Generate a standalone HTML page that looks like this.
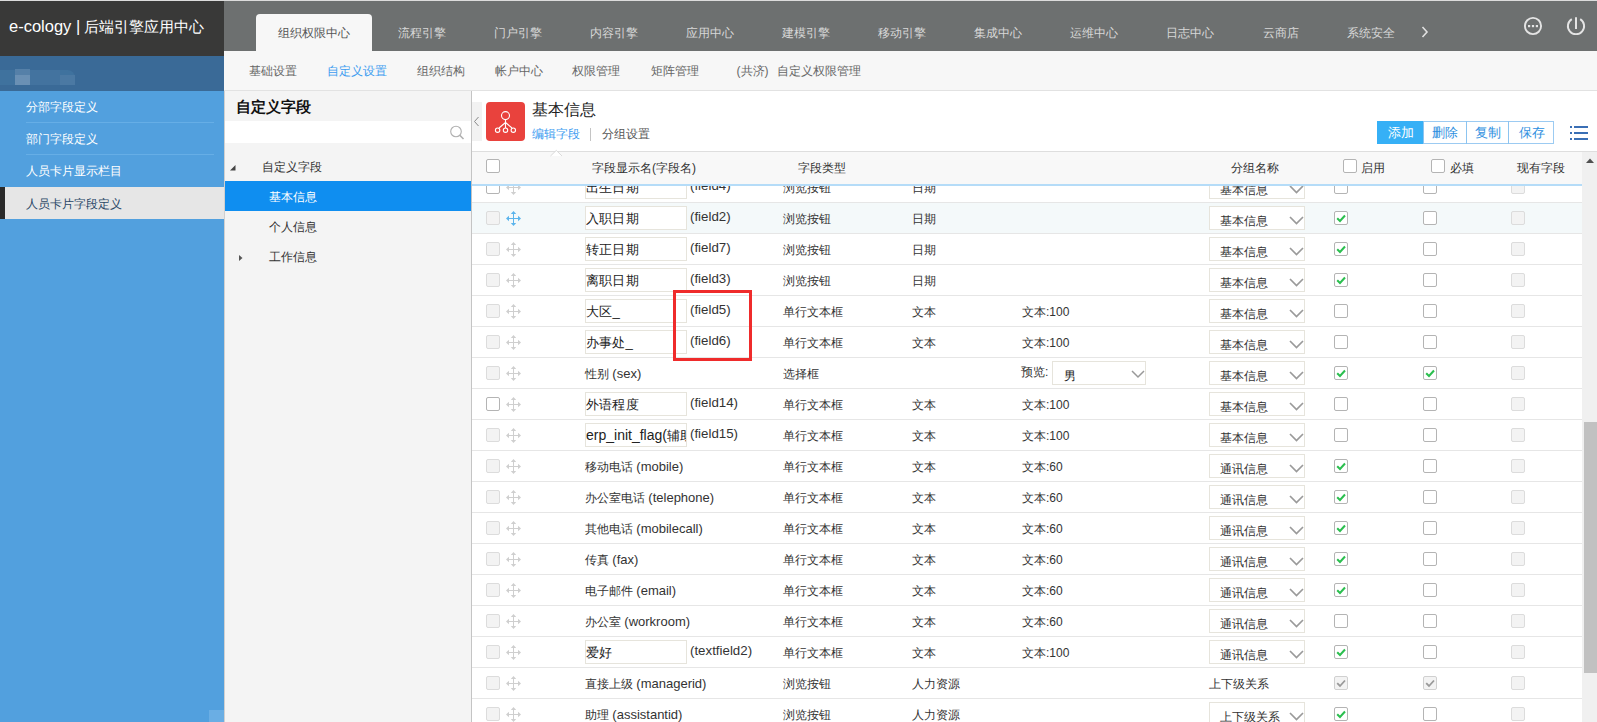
<!DOCTYPE html><html><head><meta charset="utf-8"><style>

*{box-sizing:border-box;margin:0;padding:0}
html,body{width:1597px;height:722px;overflow:hidden;background:#fff;font-family:"Liberation Sans", sans-serif;font-size:12px;color:#333}
.ab{position:absolute}
.t{position:absolute;white-space:nowrap;line-height:14px}
.cb{position:absolute;width:14px;height:14px;border:1px solid #b4b4b4;border-radius:2px;background:#fff}
.cbd{border-color:#dcdcdc;background:#f3f3f3}
.inp{position:absolute;height:24px;border:1px solid #e6e4dc;background:#fff}
.sel{position:absolute;height:24px;border:1px solid #e6e4dc;background:#fff}
svg{position:absolute;overflow:visible}
.c{display:inline-block;width:1em;text-align:center;font-style:normal}

</style></head><body>
<div class="ab" style="left:0;top:0;width:1597px;height:1px;background:#dcdcdc"></div>
<div class="ab" style="left:0;top:1px;width:224px;height:55px;background:#393938"></div>
<div class="t" style="left:9px;top:18px;font-size:15px;line-height:17px;color:#fff"><span style="font-size:16.5px">e-cology |</span> <i class="c">后</i><i class="c">端</i><i class="c">引</i><i class="c">擎</i><i class="c">应</i><i class="c">用</i><i class="c">中</i><i class="c">心</i></div>
<div class="ab" style="left:0;top:56px;width:224px;height:35px;background:#3a6a97"></div>
<div class="ab" style="left:0;top:70px;width:75px;height:15px;background:#3f729e;border-radius:0 8px 8px 0"></div>
<div class="ab" style="left:15px;top:69px;width:15px;height:6px;background:#5580a8"></div>
<div class="ab" style="left:15px;top:75px;width:15px;height:10px;background:#6a90b4"></div>
<div class="ab" style="left:30px;top:70px;width:30px;height:15px;background:#43739f"></div>
<div class="ab" style="left:60px;top:75px;width:15px;height:10px;background:#4b79a3"></div>
<div class="ab" style="left:0;top:91px;width:224px;height:631px;background:#52a0de"></div>
<div class="ab" style="left:209px;top:710px;width:15px;height:12px;background:#6aaee4"></div>
<div class="t" style="left:26px;top:100px;color:#fff"><i class="c">分</i><i class="c">部</i><i class="c">字</i><i class="c">段</i><i class="c">定</i><i class="c">义</i></div>
<div class="ab" style="left:26px;top:122px;width:188px;height:1px;background:#66aee6"></div>
<div class="t" style="left:26px;top:132px;color:#fff"><i class="c">部</i><i class="c">门</i><i class="c">字</i><i class="c">段</i><i class="c">定</i><i class="c">义</i></div>
<div class="ab" style="left:26px;top:154px;width:188px;height:1px;background:#66aee6"></div>
<div class="t" style="left:26px;top:164px;color:#fff"><i class="c">人</i><i class="c">员</i><i class="c">卡</i><i class="c">片</i><i class="c">显</i><i class="c">示</i><i class="c">栏</i><i class="c">目</i></div>
<div class="ab" style="left:0;top:187px;width:224px;height:32px;background:#e6e6e6"></div>
<div class="ab" style="left:0;top:187px;width:5px;height:32px;background:#2a2a2a"></div>
<div class="t" style="left:26px;top:197px;color:#2a4866"><i class="c">人</i><i class="c">员</i><i class="c">卡</i><i class="c">片</i><i class="c">字</i><i class="c">段</i><i class="c">定</i><i class="c">义</i></div>
<div class="ab" style="left:224px;top:1px;width:1373px;height:50px;background:#6d7070"></div>
<div class="ab" style="left:256px;top:14px;width:116px;height:37px;background:#f7f7f7;border-radius:4px 4px 0 0"></div>
<div class="t" style="left:278px;top:26px;color:#555"><i class="c">组</i><i class="c">织</i><i class="c">权</i><i class="c">限</i><i class="c">中</i><i class="c">心</i></div>
<div class="t" style="left:398.0px;top:26px;color:#d8d8d8"><i class="c">流</i><i class="c">程</i><i class="c">引</i><i class="c">擎</i></div>
<div class="t" style="left:494.0px;top:26px;color:#d8d8d8"><i class="c">门</i><i class="c">户</i><i class="c">引</i><i class="c">擎</i></div>
<div class="t" style="left:590.0px;top:26px;color:#d8d8d8"><i class="c">内</i><i class="c">容</i><i class="c">引</i><i class="c">擎</i></div>
<div class="t" style="left:686.0px;top:26px;color:#d8d8d8"><i class="c">应</i><i class="c">用</i><i class="c">中</i><i class="c">心</i></div>
<div class="t" style="left:782.0px;top:26px;color:#d8d8d8"><i class="c">建</i><i class="c">模</i><i class="c">引</i><i class="c">擎</i></div>
<div class="t" style="left:878.0px;top:26px;color:#d8d8d8"><i class="c">移</i><i class="c">动</i><i class="c">引</i><i class="c">擎</i></div>
<div class="t" style="left:974.0px;top:26px;color:#d8d8d8"><i class="c">集</i><i class="c">成</i><i class="c">中</i><i class="c">心</i></div>
<div class="t" style="left:1070.0px;top:26px;color:#d8d8d8"><i class="c">运</i><i class="c">维</i><i class="c">中</i><i class="c">心</i></div>
<div class="t" style="left:1166.0px;top:26px;color:#d8d8d8"><i class="c">日</i><i class="c">志</i><i class="c">中</i><i class="c">心</i></div>
<div class="t" style="left:1262.5px;top:26px;color:#d8d8d8"><i class="c">云</i><i class="c">商</i><i class="c">店</i></div>
<div class="t" style="left:1346.5px;top:26px;color:#d8d8d8"><i class="c">系</i><i class="c">统</i><i class="c">安</i><i class="c">全</i></div>
<svg style="left:1421px;top:26px" width="8" height="12"><path d="M1.5 1 L6 6 L1.5 11" fill="none" stroke="#e0e0e0" stroke-width="1.6"/></svg>
<svg style="left:1523px;top:16px" width="20" height="20"><circle cx="10" cy="10" r="8.1" fill="none" stroke="#e4e4e4" stroke-width="1.9"/><rect x="5" y="9" width="2.2" height="2.2" fill="#e4e4e4"/><rect x="8.9" y="9" width="2.2" height="2.2" fill="#e4e4e4"/><rect x="12.8" y="9" width="2.2" height="2.2" fill="#e4e4e4"/></svg>
<svg style="left:1566px;top:16px" width="20" height="20"><path d="M5.8 3.1 A8.1 8.1 0 1 0 14.2 3.1" fill="none" stroke="#e4e4e4" stroke-width="1.9"/><line x1="10" y1="1.2" x2="10" y2="13" stroke="#e4e4e4" stroke-width="2"/></svg>
<div class="ab" style="left:224px;top:51px;width:1373px;height:40px;background:#f7f7f7;border-bottom:1px solid #e2e2e2"></div>
<div class="t" style="left:249px;top:64px;color:#666"><i class="c">基</i><i class="c">础</i><i class="c">设</i><i class="c">置</i></div>
<div class="t" style="left:327px;top:64px;color:#3d9cf0"><i class="c">自</i><i class="c">定</i><i class="c">义</i><i class="c">设</i><i class="c">置</i></div>
<div class="t" style="left:417px;top:64px;color:#666"><i class="c">组</i><i class="c">织</i><i class="c">结</i><i class="c">构</i></div>
<div class="t" style="left:494.5px;top:64px;color:#666"><i class="c">帐</i><i class="c">户</i><i class="c">中</i><i class="c">心</i></div>
<div class="t" style="left:572px;top:64px;color:#666"><i class="c">权</i><i class="c">限</i><i class="c">管</i><i class="c">理</i></div>
<div class="t" style="left:650.5px;top:64px;color:#666"><i class="c">矩</i><i class="c">阵</i><i class="c">管</i><i class="c">理</i></div>
<div class="t" style="left:736.5px;top:64px;color:#666">(<i class="c">共</i><i class="c">济</i>)<span style="margin-left:8.5px"><i class="c">自</i><i class="c">定</i><i class="c">义</i><i class="c">权</i><i class="c">限</i><i class="c">管</i><i class="c">理</i></span></div>
<div class="ab" style="left:224px;top:91px;width:248px;height:631px;background:#f4f4f4;border-left:1px solid #d0d0d0;border-right:1px solid #c4c4c4"></div>
<div class="t" style="left:236px;top:98px;font-size:15px;line-height:17px;font-weight:bold;color:#111"><i class="c">自</i><i class="c">定</i><i class="c">义</i><i class="c">字</i><i class="c">段</i></div>
<div class="ab" style="left:225px;top:121px;width:246px;height:22px;background:#fff"></div>
<svg style="left:449px;top:125px" width="16" height="16"><circle cx="7" cy="6.5" r="5.3" fill="none" stroke="#b0b0b0" stroke-width="1.1"/><line x1="10.8" y1="10.3" x2="14.5" y2="14" stroke="#b0b0b0" stroke-width="1.6"/></svg>
<svg style="left:230px;top:165px" width="6" height="6"><path d="M5.5 0 L5.5 5.5 L0 5.5 Z" fill="#444"/></svg>
<div class="t" style="left:262px;top:160px;color:#333"><i class="c">自</i><i class="c">定</i><i class="c">义</i><i class="c">字</i><i class="c">段</i></div>
<div class="ab" style="left:225px;top:181px;width:246px;height:30px;background:#0f8ef0"></div>
<div class="t" style="left:269px;top:190px;color:#fff"><i class="c">基</i><i class="c">本</i><i class="c">信</i><i class="c">息</i></div>
<div class="t" style="left:269px;top:220px;color:#333"><i class="c">个</i><i class="c">人</i><i class="c">信</i><i class="c">息</i></div>
<svg style="left:239px;top:255px" width="5" height="8"><path d="M0 0 L3.5 3 L0 6 Z" fill="#555"/></svg>
<div class="t" style="left:269px;top:250px;color:#333"><i class="c">工</i><i class="c">作</i><i class="c">信</i><i class="c">息</i></div>
<div class="ab" style="left:472px;top:102px;width:10px;height:39px;background:#f2f2f2"></div>
<svg style="left:473px;top:116px" width="7" height="11"><path d="M5.5 1 L1.5 5.5 L5.5 10" fill="none" stroke="#888" stroke-width="1"/></svg>
<div class="ab" style="left:486px;top:102px;width:39px;height:39px;background:#e9423d;border-radius:4px"></div>
<svg style="left:486px;top:102px" width="39" height="39"><g fill="none" stroke="#fff" stroke-width="1.1"><circle cx="19.5" cy="13.6" r="4"/><path d="M19.5 17.6 V26 M19.5 20.5 L13 26 M19.5 20.5 L26 26"/><circle cx="11.6" cy="28.2" r="2.2"/><circle cx="19.5" cy="28.2" r="2.2"/><circle cx="27.3" cy="28.2" r="2.2"/></g></svg>
<div class="t" style="left:532px;top:101px;font-size:16px;line-height:18px;color:#222"><i class="c">基</i><i class="c">本</i><i class="c">信</i><i class="c">息</i></div>
<div class="t" style="left:532px;top:127px;color:#3d9cf0"><i class="c">编</i><i class="c">辑</i><i class="c">字</i><i class="c">段</i></div>
<div class="ab" style="left:590px;top:128px;width:1px;height:13px;background:#c4c4c4"></div>
<div class="t" style="left:602px;top:127px;color:#555"><i class="c">分</i><i class="c">组</i><i class="c">设</i><i class="c">置</i></div>
<div class="ab" style="left:1377px;top:121px;width:177px;height:23px;border:1px solid #9ccbf2;background:#fff"></div>
<div class="ab" style="left:1377px;top:121px;width:46px;height:23px;background:#36b0f6"></div>
<div class="ab" style="left:1466px;top:121px;width:1px;height:23px;background:#8cc4f0"></div>
<div class="ab" style="left:1508px;top:121px;width:1px;height:23px;background:#8cc4f0"></div>
<div class="ab" style="left:1423px;top:121px;width:1px;height:23px;background:#8cc4f0"></div>
<div class="t" style="left:1388px;top:126px;font-size:12.6px;line-height:15px;color:#fff"><i class="c">添</i><i class="c">加</i></div>
<div class="t" style="left:1432px;top:126px;font-size:12.6px;line-height:15px;color:#2e8fe0"><i class="c">删</i><i class="c">除</i></div>
<div class="t" style="left:1475px;top:126px;font-size:12.6px;line-height:15px;color:#2e8fe0"><i class="c">复</i><i class="c">制</i></div>
<div class="t" style="left:1519px;top:126px;font-size:12.6px;line-height:15px;color:#2e8fe0"><i class="c">保</i><i class="c">存</i></div>
<svg style="left:1569px;top:125px" width="20" height="16"><g fill="#3a6fb5"><rect x="1" y="1" width="2" height="2"/><rect x="1" y="7" width="2" height="2"/><rect x="1" y="13" width="2" height="2"/><rect x="5" y="1" width="14" height="2"/><rect x="5" y="7" width="14" height="2"/><rect x="5" y="13" width="14" height="2"/></g></svg>
<div class="ab" style="left:472px;top:151px;width:1125px;height:1px;background:#dedede"></div>
<div class="ab" style="left:472px;top:152px;width:1110px;height:32px;background:#f8f8f8"></div>
<svg style="left:550px;top:150px" width="13" height="7"><path d="M0.5 6 L6.3 0.4 L12 6 Z" fill="#fff" stroke="none"/><path d="M0.5 6 L6.3 0.4 L12 6" fill="none" stroke="#dadada" stroke-width="1"/></svg>
<div class="cb" style="left:486px;top:159px"></div>
<div class="t" style="left:592px;top:161px;color:#333"><i class="c">字</i><i class="c">段</i><i class="c">显</i><i class="c">示</i><i class="c">名</i>(<i class="c">字</i><i class="c">段</i><i class="c">名</i>)</div>
<div class="t" style="left:798px;top:161px;color:#333"><i class="c">字</i><i class="c">段</i><i class="c">类</i><i class="c">型</i></div>
<div class="t" style="left:1231px;top:161px;color:#333"><i class="c">分</i><i class="c">组</i><i class="c">名</i><i class="c">称</i></div>
<div class="cb" style="left:1343px;top:159px"></div>
<div class="t" style="left:1361px;top:161px;color:#333"><i class="c">启</i><i class="c">用</i></div>
<div class="cb" style="left:1431px;top:159px"></div>
<div class="t" style="left:1450px;top:161px;color:#333"><i class="c">必</i><i class="c">填</i></div>
<div class="t" style="left:1517px;top:161px;color:#333"><i class="c">现</i><i class="c">有</i><i class="c">字</i><i class="c">段</i></div>
<div class="ab" style="left:1582px;top:152px;width:15px;height:570px;background:#f0f0f0"></div>
<svg style="left:1586px;top:158px" width="8" height="6"><path d="M0 5 L4 0.5 L8 5 Z" fill="#505050"/></svg>
<div class="ab" style="left:1584px;top:422px;width:13px;height:251px;background:#c1c1c1"></div>
<div class="ab" style="left:472px;top:186px;width:1110px;height:536px;overflow:hidden">
<div class="ab" style="left:0;top:-14px;width:1110px;height:31px;background:#fff;border-bottom:1px solid #e6e6e6"></div>
<div class="cb " style="left:14px;top:-6px"></div>
<svg style="left:34px;top:-6px" width="15" height="15"><g fill="#cfcfcf" stroke="none"><rect x="7" y="2.5" width="1" height="10"/><rect x="2.5" y="7" width="10" height="1"/><path d="M7.5 0 L10.2 3 L4.8 3 Z"/><path d="M7.5 15 L10.2 12 L4.8 12 Z"/><path d="M0 7.5 L3 4.8 L3 10.2 Z"/><path d="M15 7.5 L12 4.8 L12 10.2 Z"/></g></svg>
<div class="inp" style="left:113px;top:-11px;width:102px"></div>
<div class="t" style="left:114px;top:-6px;font-size:13.2px;line-height:15px;color:#222;width:100px;overflow:hidden"><i class="c">出</i><i class="c">生</i><i class="c">日</i><i class="c">期</i></div>
<div class="t" style="left:218px;top:-8px;font-size:13.3px;line-height:15px;color:#333">(field4)</div>
<div class="t" style="left:311px;top:-5px;color:#333"><i class="c">浏</i><i class="c">览</i><i class="c">按</i><i class="c">钮</i></div>
<div class="t" style="left:440px;top:-5px;color:#333"><i class="c">日</i><i class="c">期</i></div>
<div class="sel" style="left:737px;top:-11px;width:96px"></div>
<div class="t" style="left:748px;top:-3px;color:#333"><i class="c">基</i><i class="c">本</i><i class="c">信</i><i class="c">息</i></div>
<svg style="left:817px;top:-1px" width="15" height="9"><path d="M1 1 L7.5 7.5 L14 1" fill="none" stroke="#9a9a9a" stroke-width="1.7"/></svg>
<div class="cb" style="left:862px;top:-6px"></div>
<div class="cb" style="left:951px;top:-6px"></div>
<div class="cb cbd" style="left:1039px;top:-6px"></div>
<div class="ab" style="left:0;top:17px;width:1110px;height:31px;background:#f4f9fa;border-bottom:1px solid #e6e6e6"></div>
<div class="cb cbd" style="left:14px;top:25px"></div>
<svg style="left:34px;top:25px" width="15" height="15"><g fill="#5bb4ec" stroke="none"><rect x="7" y="2.5" width="1" height="10"/><rect x="2.5" y="7" width="10" height="1"/><path d="M7.5 0 L10.2 3 L4.8 3 Z"/><path d="M7.5 15 L10.2 12 L4.8 12 Z"/><path d="M0 7.5 L3 4.8 L3 10.2 Z"/><path d="M15 7.5 L12 4.8 L12 10.2 Z"/></g></svg>
<div class="inp" style="left:113px;top:20px;width:102px"></div>
<div class="t" style="left:114px;top:25px;font-size:13.2px;line-height:15px;color:#222;width:100px;overflow:hidden"><i class="c">入</i><i class="c">职</i><i class="c">日</i><i class="c">期</i></div>
<div class="t" style="left:218px;top:23px;font-size:13.3px;line-height:15px;color:#333">(field2)</div>
<div class="t" style="left:311px;top:26px;color:#333"><i class="c">浏</i><i class="c">览</i><i class="c">按</i><i class="c">钮</i></div>
<div class="t" style="left:440px;top:26px;color:#333"><i class="c">日</i><i class="c">期</i></div>
<div class="sel" style="left:737px;top:20px;width:96px"></div>
<div class="t" style="left:748px;top:28px;color:#333"><i class="c">基</i><i class="c">本</i><i class="c">信</i><i class="c">息</i></div>
<svg style="left:817px;top:30px" width="15" height="9"><path d="M1 1 L7.5 7.5 L14 1" fill="none" stroke="#9a9a9a" stroke-width="1.7"/></svg>
<div class="cb" style="left:862px;top:25px"></div>
<svg style="left:862px;top:25px" width="14" height="14"><path d="M3.2 7.2 L6 10 L11 4.5" fill="none" stroke="#2bbf4f" stroke-width="2"/></svg>
<div class="cb" style="left:951px;top:25px"></div>
<div class="cb cbd" style="left:1039px;top:25px"></div>
<div class="ab" style="left:0;top:48px;width:1110px;height:31px;background:#fff;border-bottom:1px solid #e6e6e6"></div>
<div class="cb cbd" style="left:14px;top:56px"></div>
<svg style="left:34px;top:56px" width="15" height="15"><g fill="#cfcfcf" stroke="none"><rect x="7" y="2.5" width="1" height="10"/><rect x="2.5" y="7" width="10" height="1"/><path d="M7.5 0 L10.2 3 L4.8 3 Z"/><path d="M7.5 15 L10.2 12 L4.8 12 Z"/><path d="M0 7.5 L3 4.8 L3 10.2 Z"/><path d="M15 7.5 L12 4.8 L12 10.2 Z"/></g></svg>
<div class="inp" style="left:113px;top:51px;width:102px"></div>
<div class="t" style="left:114px;top:56px;font-size:13.2px;line-height:15px;color:#222;width:100px;overflow:hidden"><i class="c">转</i><i class="c">正</i><i class="c">日</i><i class="c">期</i></div>
<div class="t" style="left:218px;top:54px;font-size:13.3px;line-height:15px;color:#333">(field7)</div>
<div class="t" style="left:311px;top:57px;color:#333"><i class="c">浏</i><i class="c">览</i><i class="c">按</i><i class="c">钮</i></div>
<div class="t" style="left:440px;top:57px;color:#333"><i class="c">日</i><i class="c">期</i></div>
<div class="sel" style="left:737px;top:51px;width:96px"></div>
<div class="t" style="left:748px;top:59px;color:#333"><i class="c">基</i><i class="c">本</i><i class="c">信</i><i class="c">息</i></div>
<svg style="left:817px;top:61px" width="15" height="9"><path d="M1 1 L7.5 7.5 L14 1" fill="none" stroke="#9a9a9a" stroke-width="1.7"/></svg>
<div class="cb" style="left:862px;top:56px"></div>
<svg style="left:862px;top:56px" width="14" height="14"><path d="M3.2 7.2 L6 10 L11 4.5" fill="none" stroke="#2bbf4f" stroke-width="2"/></svg>
<div class="cb" style="left:951px;top:56px"></div>
<div class="cb cbd" style="left:1039px;top:56px"></div>
<div class="ab" style="left:0;top:79px;width:1110px;height:31px;background:#fff;border-bottom:1px solid #e6e6e6"></div>
<div class="cb cbd" style="left:14px;top:87px"></div>
<svg style="left:34px;top:87px" width="15" height="15"><g fill="#cfcfcf" stroke="none"><rect x="7" y="2.5" width="1" height="10"/><rect x="2.5" y="7" width="10" height="1"/><path d="M7.5 0 L10.2 3 L4.8 3 Z"/><path d="M7.5 15 L10.2 12 L4.8 12 Z"/><path d="M0 7.5 L3 4.8 L3 10.2 Z"/><path d="M15 7.5 L12 4.8 L12 10.2 Z"/></g></svg>
<div class="inp" style="left:113px;top:82px;width:102px"></div>
<div class="t" style="left:114px;top:87px;font-size:13.2px;line-height:15px;color:#222;width:100px;overflow:hidden"><i class="c">离</i><i class="c">职</i><i class="c">日</i><i class="c">期</i></div>
<div class="t" style="left:218px;top:85px;font-size:13.3px;line-height:15px;color:#333">(field3)</div>
<div class="t" style="left:311px;top:88px;color:#333"><i class="c">浏</i><i class="c">览</i><i class="c">按</i><i class="c">钮</i></div>
<div class="t" style="left:440px;top:88px;color:#333"><i class="c">日</i><i class="c">期</i></div>
<div class="sel" style="left:737px;top:82px;width:96px"></div>
<div class="t" style="left:748px;top:90px;color:#333"><i class="c">基</i><i class="c">本</i><i class="c">信</i><i class="c">息</i></div>
<svg style="left:817px;top:92px" width="15" height="9"><path d="M1 1 L7.5 7.5 L14 1" fill="none" stroke="#9a9a9a" stroke-width="1.7"/></svg>
<div class="cb" style="left:862px;top:87px"></div>
<svg style="left:862px;top:87px" width="14" height="14"><path d="M3.2 7.2 L6 10 L11 4.5" fill="none" stroke="#2bbf4f" stroke-width="2"/></svg>
<div class="cb" style="left:951px;top:87px"></div>
<div class="cb cbd" style="left:1039px;top:87px"></div>
<div class="ab" style="left:0;top:110px;width:1110px;height:31px;background:#fff;border-bottom:1px solid #e6e6e6"></div>
<div class="cb cbd" style="left:14px;top:118px"></div>
<svg style="left:34px;top:118px" width="15" height="15"><g fill="#cfcfcf" stroke="none"><rect x="7" y="2.5" width="1" height="10"/><rect x="2.5" y="7" width="10" height="1"/><path d="M7.5 0 L10.2 3 L4.8 3 Z"/><path d="M7.5 15 L10.2 12 L4.8 12 Z"/><path d="M0 7.5 L3 4.8 L3 10.2 Z"/><path d="M15 7.5 L12 4.8 L12 10.2 Z"/></g></svg>
<div class="inp" style="left:113px;top:113px;width:102px"></div>
<div class="t" style="left:114px;top:118px;font-size:13.2px;line-height:15px;color:#222;width:100px;overflow:hidden"><i class="c">大</i><i class="c">区</i>_</div>
<div class="t" style="left:218px;top:116px;font-size:13.3px;line-height:15px;color:#333">(field5)</div>
<div class="t" style="left:311px;top:119px;color:#333"><i class="c">单</i><i class="c">行</i><i class="c">文</i><i class="c">本</i><i class="c">框</i></div>
<div class="t" style="left:440px;top:119px;color:#333"><i class="c">文</i><i class="c">本</i></div>
<div class="t" style="left:550px;top:119px;color:#333"><i class="c">文</i><i class="c">本</i>:100</div>
<div class="sel" style="left:737px;top:113px;width:96px"></div>
<div class="t" style="left:748px;top:121px;color:#333"><i class="c">基</i><i class="c">本</i><i class="c">信</i><i class="c">息</i></div>
<svg style="left:817px;top:123px" width="15" height="9"><path d="M1 1 L7.5 7.5 L14 1" fill="none" stroke="#9a9a9a" stroke-width="1.7"/></svg>
<div class="cb" style="left:862px;top:118px"></div>
<div class="cb" style="left:951px;top:118px"></div>
<div class="cb cbd" style="left:1039px;top:118px"></div>
<div class="ab" style="left:0;top:141px;width:1110px;height:31px;background:#fff;border-bottom:1px solid #e6e6e6"></div>
<div class="cb cbd" style="left:14px;top:149px"></div>
<svg style="left:34px;top:149px" width="15" height="15"><g fill="#cfcfcf" stroke="none"><rect x="7" y="2.5" width="1" height="10"/><rect x="2.5" y="7" width="10" height="1"/><path d="M7.5 0 L10.2 3 L4.8 3 Z"/><path d="M7.5 15 L10.2 12 L4.8 12 Z"/><path d="M0 7.5 L3 4.8 L3 10.2 Z"/><path d="M15 7.5 L12 4.8 L12 10.2 Z"/></g></svg>
<div class="inp" style="left:113px;top:144px;width:102px"></div>
<div class="t" style="left:114px;top:149px;font-size:13.2px;line-height:15px;color:#222;width:100px;overflow:hidden"><i class="c">办</i><i class="c">事</i><i class="c">处</i>_</div>
<div class="t" style="left:218px;top:147px;font-size:13.3px;line-height:15px;color:#333">(field6)</div>
<div class="t" style="left:311px;top:150px;color:#333"><i class="c">单</i><i class="c">行</i><i class="c">文</i><i class="c">本</i><i class="c">框</i></div>
<div class="t" style="left:440px;top:150px;color:#333"><i class="c">文</i><i class="c">本</i></div>
<div class="t" style="left:550px;top:150px;color:#333"><i class="c">文</i><i class="c">本</i>:100</div>
<div class="sel" style="left:737px;top:144px;width:96px"></div>
<div class="t" style="left:748px;top:152px;color:#333"><i class="c">基</i><i class="c">本</i><i class="c">信</i><i class="c">息</i></div>
<svg style="left:817px;top:154px" width="15" height="9"><path d="M1 1 L7.5 7.5 L14 1" fill="none" stroke="#9a9a9a" stroke-width="1.7"/></svg>
<div class="cb" style="left:862px;top:149px"></div>
<div class="cb" style="left:951px;top:149px"></div>
<div class="cb cbd" style="left:1039px;top:149px"></div>
<div class="ab" style="left:0;top:172px;width:1110px;height:31px;background:#fff;border-bottom:1px solid #e6e6e6"></div>
<div class="cb cbd" style="left:14px;top:180px"></div>
<svg style="left:34px;top:180px" width="15" height="15"><g fill="#cfcfcf" stroke="none"><rect x="7" y="2.5" width="1" height="10"/><rect x="2.5" y="7" width="10" height="1"/><path d="M7.5 0 L10.2 3 L4.8 3 Z"/><path d="M7.5 15 L10.2 12 L4.8 12 Z"/><path d="M0 7.5 L3 4.8 L3 10.2 Z"/><path d="M15 7.5 L12 4.8 L12 10.2 Z"/></g></svg>
<div class="t" style="left:113px;top:181px;font-size:12px;color:#333"><i class="c">性</i><i class="c">别</i> <span style="font-size:13px">(sex)</span></div>
<div class="t" style="left:311px;top:181px;color:#333"><i class="c">选</i><i class="c">择</i><i class="c">框</i></div>
<div class="t" style="left:549px;top:179px;color:#333"><i class="c">预</i><i class="c">览</i>:</div>
<div class="sel" style="left:580px;top:175px;width:94px"></div>
<div class="t" style="left:592px;top:183px;color:#222"><i class="c">男</i></div>
<svg style="left:659px;top:184px" width="14" height="8"><path d="M1 1 L7 7 L13 1" fill="none" stroke="#999" stroke-width="1.5"/></svg>
<div class="sel" style="left:737px;top:175px;width:96px"></div>
<div class="t" style="left:748px;top:183px;color:#333"><i class="c">基</i><i class="c">本</i><i class="c">信</i><i class="c">息</i></div>
<svg style="left:817px;top:185px" width="15" height="9"><path d="M1 1 L7.5 7.5 L14 1" fill="none" stroke="#9a9a9a" stroke-width="1.7"/></svg>
<div class="cb" style="left:862px;top:180px"></div>
<svg style="left:862px;top:180px" width="14" height="14"><path d="M3.2 7.2 L6 10 L11 4.5" fill="none" stroke="#2bbf4f" stroke-width="2"/></svg>
<div class="cb" style="left:951px;top:180px"></div>
<svg style="left:951px;top:180px" width="14" height="14"><path d="M3.2 7.2 L6 10 L11 4.5" fill="none" stroke="#2bbf4f" stroke-width="2"/></svg>
<div class="cb cbd" style="left:1039px;top:180px"></div>
<div class="ab" style="left:0;top:203px;width:1110px;height:31px;background:#fff;border-bottom:1px solid #e6e6e6"></div>
<div class="cb " style="left:14px;top:211px"></div>
<svg style="left:34px;top:211px" width="15" height="15"><g fill="#cfcfcf" stroke="none"><rect x="7" y="2.5" width="1" height="10"/><rect x="2.5" y="7" width="10" height="1"/><path d="M7.5 0 L10.2 3 L4.8 3 Z"/><path d="M7.5 15 L10.2 12 L4.8 12 Z"/><path d="M0 7.5 L3 4.8 L3 10.2 Z"/><path d="M15 7.5 L12 4.8 L12 10.2 Z"/></g></svg>
<div class="inp" style="left:113px;top:206px;width:102px"></div>
<div class="t" style="left:114px;top:211px;font-size:13.2px;line-height:15px;color:#222;width:100px;overflow:hidden"><i class="c">外</i><i class="c">语</i><i class="c">程</i><i class="c">度</i></div>
<div class="t" style="left:218px;top:209px;font-size:13.3px;line-height:15px;color:#333">(field14)</div>
<div class="t" style="left:311px;top:212px;color:#333"><i class="c">单</i><i class="c">行</i><i class="c">文</i><i class="c">本</i><i class="c">框</i></div>
<div class="t" style="left:440px;top:212px;color:#333"><i class="c">文</i><i class="c">本</i></div>
<div class="t" style="left:550px;top:212px;color:#333"><i class="c">文</i><i class="c">本</i>:100</div>
<div class="sel" style="left:737px;top:206px;width:96px"></div>
<div class="t" style="left:748px;top:214px;color:#333"><i class="c">基</i><i class="c">本</i><i class="c">信</i><i class="c">息</i></div>
<svg style="left:817px;top:216px" width="15" height="9"><path d="M1 1 L7.5 7.5 L14 1" fill="none" stroke="#9a9a9a" stroke-width="1.7"/></svg>
<div class="cb" style="left:862px;top:211px"></div>
<div class="cb" style="left:951px;top:211px"></div>
<div class="cb cbd" style="left:1039px;top:211px"></div>
<div class="ab" style="left:0;top:234px;width:1110px;height:31px;background:#fff;border-bottom:1px solid #e6e6e6"></div>
<div class="cb cbd" style="left:14px;top:242px"></div>
<svg style="left:34px;top:242px" width="15" height="15"><g fill="#cfcfcf" stroke="none"><rect x="7" y="2.5" width="1" height="10"/><rect x="2.5" y="7" width="10" height="1"/><path d="M7.5 0 L10.2 3 L4.8 3 Z"/><path d="M7.5 15 L10.2 12 L4.8 12 Z"/><path d="M0 7.5 L3 4.8 L3 10.2 Z"/><path d="M15 7.5 L12 4.8 L12 10.2 Z"/></g></svg>
<div class="inp" style="left:113px;top:237px;width:102px"></div>
<div class="t" style="left:114px;top:242px;font-size:13.2px;line-height:15px;color:#222;width:100px;overflow:hidden"><span style="font-size:14px">erp_init_flag(</span><i class="c">辅</i><i class="c">助</i></div>
<div class="t" style="left:218px;top:240px;font-size:13.3px;line-height:15px;color:#333">(field15)</div>
<div class="t" style="left:311px;top:243px;color:#333"><i class="c">单</i><i class="c">行</i><i class="c">文</i><i class="c">本</i><i class="c">框</i></div>
<div class="t" style="left:440px;top:243px;color:#333"><i class="c">文</i><i class="c">本</i></div>
<div class="t" style="left:550px;top:243px;color:#333"><i class="c">文</i><i class="c">本</i>:100</div>
<div class="sel" style="left:737px;top:237px;width:96px"></div>
<div class="t" style="left:748px;top:245px;color:#333"><i class="c">基</i><i class="c">本</i><i class="c">信</i><i class="c">息</i></div>
<svg style="left:817px;top:247px" width="15" height="9"><path d="M1 1 L7.5 7.5 L14 1" fill="none" stroke="#9a9a9a" stroke-width="1.7"/></svg>
<div class="cb" style="left:862px;top:242px"></div>
<div class="cb" style="left:951px;top:242px"></div>
<div class="cb cbd" style="left:1039px;top:242px"></div>
<div class="ab" style="left:0;top:265px;width:1110px;height:31px;background:#fff;border-bottom:1px solid #e6e6e6"></div>
<div class="cb cbd" style="left:14px;top:273px"></div>
<svg style="left:34px;top:273px" width="15" height="15"><g fill="#cfcfcf" stroke="none"><rect x="7" y="2.5" width="1" height="10"/><rect x="2.5" y="7" width="10" height="1"/><path d="M7.5 0 L10.2 3 L4.8 3 Z"/><path d="M7.5 15 L10.2 12 L4.8 12 Z"/><path d="M0 7.5 L3 4.8 L3 10.2 Z"/><path d="M15 7.5 L12 4.8 L12 10.2 Z"/></g></svg>
<div class="t" style="left:113px;top:274px;font-size:12px;color:#333"><i class="c">移</i><i class="c">动</i><i class="c">电</i><i class="c">话</i> <span style="font-size:13px">(mobile)</span></div>
<div class="t" style="left:311px;top:274px;color:#333"><i class="c">单</i><i class="c">行</i><i class="c">文</i><i class="c">本</i><i class="c">框</i></div>
<div class="t" style="left:440px;top:274px;color:#333"><i class="c">文</i><i class="c">本</i></div>
<div class="t" style="left:550px;top:274px;color:#333"><i class="c">文</i><i class="c">本</i>:60</div>
<div class="sel" style="left:737px;top:268px;width:96px"></div>
<div class="t" style="left:748px;top:276px;color:#333"><i class="c">通</i><i class="c">讯</i><i class="c">信</i><i class="c">息</i></div>
<svg style="left:817px;top:278px" width="15" height="9"><path d="M1 1 L7.5 7.5 L14 1" fill="none" stroke="#9a9a9a" stroke-width="1.7"/></svg>
<div class="cb" style="left:862px;top:273px"></div>
<svg style="left:862px;top:273px" width="14" height="14"><path d="M3.2 7.2 L6 10 L11 4.5" fill="none" stroke="#2bbf4f" stroke-width="2"/></svg>
<div class="cb" style="left:951px;top:273px"></div>
<div class="cb cbd" style="left:1039px;top:273px"></div>
<div class="ab" style="left:0;top:296px;width:1110px;height:31px;background:#fff;border-bottom:1px solid #e6e6e6"></div>
<div class="cb cbd" style="left:14px;top:304px"></div>
<svg style="left:34px;top:304px" width="15" height="15"><g fill="#cfcfcf" stroke="none"><rect x="7" y="2.5" width="1" height="10"/><rect x="2.5" y="7" width="10" height="1"/><path d="M7.5 0 L10.2 3 L4.8 3 Z"/><path d="M7.5 15 L10.2 12 L4.8 12 Z"/><path d="M0 7.5 L3 4.8 L3 10.2 Z"/><path d="M15 7.5 L12 4.8 L12 10.2 Z"/></g></svg>
<div class="t" style="left:113px;top:305px;font-size:12px;color:#333"><i class="c">办</i><i class="c">公</i><i class="c">室</i><i class="c">电</i><i class="c">话</i> <span style="font-size:13px">(telephone)</span></div>
<div class="t" style="left:311px;top:305px;color:#333"><i class="c">单</i><i class="c">行</i><i class="c">文</i><i class="c">本</i><i class="c">框</i></div>
<div class="t" style="left:440px;top:305px;color:#333"><i class="c">文</i><i class="c">本</i></div>
<div class="t" style="left:550px;top:305px;color:#333"><i class="c">文</i><i class="c">本</i>:60</div>
<div class="sel" style="left:737px;top:299px;width:96px"></div>
<div class="t" style="left:748px;top:307px;color:#333"><i class="c">通</i><i class="c">讯</i><i class="c">信</i><i class="c">息</i></div>
<svg style="left:817px;top:309px" width="15" height="9"><path d="M1 1 L7.5 7.5 L14 1" fill="none" stroke="#9a9a9a" stroke-width="1.7"/></svg>
<div class="cb" style="left:862px;top:304px"></div>
<svg style="left:862px;top:304px" width="14" height="14"><path d="M3.2 7.2 L6 10 L11 4.5" fill="none" stroke="#2bbf4f" stroke-width="2"/></svg>
<div class="cb" style="left:951px;top:304px"></div>
<div class="cb cbd" style="left:1039px;top:304px"></div>
<div class="ab" style="left:0;top:327px;width:1110px;height:31px;background:#fff;border-bottom:1px solid #e6e6e6"></div>
<div class="cb cbd" style="left:14px;top:335px"></div>
<svg style="left:34px;top:335px" width="15" height="15"><g fill="#cfcfcf" stroke="none"><rect x="7" y="2.5" width="1" height="10"/><rect x="2.5" y="7" width="10" height="1"/><path d="M7.5 0 L10.2 3 L4.8 3 Z"/><path d="M7.5 15 L10.2 12 L4.8 12 Z"/><path d="M0 7.5 L3 4.8 L3 10.2 Z"/><path d="M15 7.5 L12 4.8 L12 10.2 Z"/></g></svg>
<div class="t" style="left:113px;top:336px;font-size:12px;color:#333"><i class="c">其</i><i class="c">他</i><i class="c">电</i><i class="c">话</i> <span style="font-size:13px">(mobilecall)</span></div>
<div class="t" style="left:311px;top:336px;color:#333"><i class="c">单</i><i class="c">行</i><i class="c">文</i><i class="c">本</i><i class="c">框</i></div>
<div class="t" style="left:440px;top:336px;color:#333"><i class="c">文</i><i class="c">本</i></div>
<div class="t" style="left:550px;top:336px;color:#333"><i class="c">文</i><i class="c">本</i>:60</div>
<div class="sel" style="left:737px;top:330px;width:96px"></div>
<div class="t" style="left:748px;top:338px;color:#333"><i class="c">通</i><i class="c">讯</i><i class="c">信</i><i class="c">息</i></div>
<svg style="left:817px;top:340px" width="15" height="9"><path d="M1 1 L7.5 7.5 L14 1" fill="none" stroke="#9a9a9a" stroke-width="1.7"/></svg>
<div class="cb" style="left:862px;top:335px"></div>
<svg style="left:862px;top:335px" width="14" height="14"><path d="M3.2 7.2 L6 10 L11 4.5" fill="none" stroke="#2bbf4f" stroke-width="2"/></svg>
<div class="cb" style="left:951px;top:335px"></div>
<div class="cb cbd" style="left:1039px;top:335px"></div>
<div class="ab" style="left:0;top:358px;width:1110px;height:31px;background:#fff;border-bottom:1px solid #e6e6e6"></div>
<div class="cb cbd" style="left:14px;top:366px"></div>
<svg style="left:34px;top:366px" width="15" height="15"><g fill="#cfcfcf" stroke="none"><rect x="7" y="2.5" width="1" height="10"/><rect x="2.5" y="7" width="10" height="1"/><path d="M7.5 0 L10.2 3 L4.8 3 Z"/><path d="M7.5 15 L10.2 12 L4.8 12 Z"/><path d="M0 7.5 L3 4.8 L3 10.2 Z"/><path d="M15 7.5 L12 4.8 L12 10.2 Z"/></g></svg>
<div class="t" style="left:113px;top:367px;font-size:12px;color:#333"><i class="c">传</i><i class="c">真</i> <span style="font-size:13px">(fax)</span></div>
<div class="t" style="left:311px;top:367px;color:#333"><i class="c">单</i><i class="c">行</i><i class="c">文</i><i class="c">本</i><i class="c">框</i></div>
<div class="t" style="left:440px;top:367px;color:#333"><i class="c">文</i><i class="c">本</i></div>
<div class="t" style="left:550px;top:367px;color:#333"><i class="c">文</i><i class="c">本</i>:60</div>
<div class="sel" style="left:737px;top:361px;width:96px"></div>
<div class="t" style="left:748px;top:369px;color:#333"><i class="c">通</i><i class="c">讯</i><i class="c">信</i><i class="c">息</i></div>
<svg style="left:817px;top:371px" width="15" height="9"><path d="M1 1 L7.5 7.5 L14 1" fill="none" stroke="#9a9a9a" stroke-width="1.7"/></svg>
<div class="cb" style="left:862px;top:366px"></div>
<svg style="left:862px;top:366px" width="14" height="14"><path d="M3.2 7.2 L6 10 L11 4.5" fill="none" stroke="#2bbf4f" stroke-width="2"/></svg>
<div class="cb" style="left:951px;top:366px"></div>
<div class="cb cbd" style="left:1039px;top:366px"></div>
<div class="ab" style="left:0;top:389px;width:1110px;height:31px;background:#fff;border-bottom:1px solid #e6e6e6"></div>
<div class="cb cbd" style="left:14px;top:397px"></div>
<svg style="left:34px;top:397px" width="15" height="15"><g fill="#cfcfcf" stroke="none"><rect x="7" y="2.5" width="1" height="10"/><rect x="2.5" y="7" width="10" height="1"/><path d="M7.5 0 L10.2 3 L4.8 3 Z"/><path d="M7.5 15 L10.2 12 L4.8 12 Z"/><path d="M0 7.5 L3 4.8 L3 10.2 Z"/><path d="M15 7.5 L12 4.8 L12 10.2 Z"/></g></svg>
<div class="t" style="left:113px;top:398px;font-size:12px;color:#333"><i class="c">电</i><i class="c">子</i><i class="c">邮</i><i class="c">件</i> <span style="font-size:13px">(email)</span></div>
<div class="t" style="left:311px;top:398px;color:#333"><i class="c">单</i><i class="c">行</i><i class="c">文</i><i class="c">本</i><i class="c">框</i></div>
<div class="t" style="left:440px;top:398px;color:#333"><i class="c">文</i><i class="c">本</i></div>
<div class="t" style="left:550px;top:398px;color:#333"><i class="c">文</i><i class="c">本</i>:60</div>
<div class="sel" style="left:737px;top:392px;width:96px"></div>
<div class="t" style="left:748px;top:400px;color:#333"><i class="c">通</i><i class="c">讯</i><i class="c">信</i><i class="c">息</i></div>
<svg style="left:817px;top:402px" width="15" height="9"><path d="M1 1 L7.5 7.5 L14 1" fill="none" stroke="#9a9a9a" stroke-width="1.7"/></svg>
<div class="cb" style="left:862px;top:397px"></div>
<svg style="left:862px;top:397px" width="14" height="14"><path d="M3.2 7.2 L6 10 L11 4.5" fill="none" stroke="#2bbf4f" stroke-width="2"/></svg>
<div class="cb" style="left:951px;top:397px"></div>
<div class="cb cbd" style="left:1039px;top:397px"></div>
<div class="ab" style="left:0;top:420px;width:1110px;height:31px;background:#fff;border-bottom:1px solid #e6e6e6"></div>
<div class="cb cbd" style="left:14px;top:428px"></div>
<svg style="left:34px;top:428px" width="15" height="15"><g fill="#cfcfcf" stroke="none"><rect x="7" y="2.5" width="1" height="10"/><rect x="2.5" y="7" width="10" height="1"/><path d="M7.5 0 L10.2 3 L4.8 3 Z"/><path d="M7.5 15 L10.2 12 L4.8 12 Z"/><path d="M0 7.5 L3 4.8 L3 10.2 Z"/><path d="M15 7.5 L12 4.8 L12 10.2 Z"/></g></svg>
<div class="t" style="left:113px;top:429px;font-size:12px;color:#333"><i class="c">办</i><i class="c">公</i><i class="c">室</i> <span style="font-size:13px">(workroom)</span></div>
<div class="t" style="left:311px;top:429px;color:#333"><i class="c">单</i><i class="c">行</i><i class="c">文</i><i class="c">本</i><i class="c">框</i></div>
<div class="t" style="left:440px;top:429px;color:#333"><i class="c">文</i><i class="c">本</i></div>
<div class="t" style="left:550px;top:429px;color:#333"><i class="c">文</i><i class="c">本</i>:60</div>
<div class="sel" style="left:737px;top:423px;width:96px"></div>
<div class="t" style="left:748px;top:431px;color:#333"><i class="c">通</i><i class="c">讯</i><i class="c">信</i><i class="c">息</i></div>
<svg style="left:817px;top:433px" width="15" height="9"><path d="M1 1 L7.5 7.5 L14 1" fill="none" stroke="#9a9a9a" stroke-width="1.7"/></svg>
<div class="cb" style="left:862px;top:428px"></div>
<div class="cb" style="left:951px;top:428px"></div>
<div class="cb cbd" style="left:1039px;top:428px"></div>
<div class="ab" style="left:0;top:451px;width:1110px;height:31px;background:#fff;border-bottom:1px solid #e6e6e6"></div>
<div class="cb cbd" style="left:14px;top:459px"></div>
<svg style="left:34px;top:459px" width="15" height="15"><g fill="#cfcfcf" stroke="none"><rect x="7" y="2.5" width="1" height="10"/><rect x="2.5" y="7" width="10" height="1"/><path d="M7.5 0 L10.2 3 L4.8 3 Z"/><path d="M7.5 15 L10.2 12 L4.8 12 Z"/><path d="M0 7.5 L3 4.8 L3 10.2 Z"/><path d="M15 7.5 L12 4.8 L12 10.2 Z"/></g></svg>
<div class="inp" style="left:113px;top:454px;width:102px"></div>
<div class="t" style="left:114px;top:459px;font-size:13.2px;line-height:15px;color:#222;width:100px;overflow:hidden"><i class="c">爱</i><i class="c">好</i></div>
<div class="t" style="left:218px;top:457px;font-size:13.3px;line-height:15px;color:#333">(textfield2)</div>
<div class="t" style="left:311px;top:460px;color:#333"><i class="c">单</i><i class="c">行</i><i class="c">文</i><i class="c">本</i><i class="c">框</i></div>
<div class="t" style="left:440px;top:460px;color:#333"><i class="c">文</i><i class="c">本</i></div>
<div class="t" style="left:550px;top:460px;color:#333"><i class="c">文</i><i class="c">本</i>:100</div>
<div class="sel" style="left:737px;top:454px;width:96px"></div>
<div class="t" style="left:748px;top:462px;color:#333"><i class="c">通</i><i class="c">讯</i><i class="c">信</i><i class="c">息</i></div>
<svg style="left:817px;top:464px" width="15" height="9"><path d="M1 1 L7.5 7.5 L14 1" fill="none" stroke="#9a9a9a" stroke-width="1.7"/></svg>
<div class="cb" style="left:862px;top:459px"></div>
<svg style="left:862px;top:459px" width="14" height="14"><path d="M3.2 7.2 L6 10 L11 4.5" fill="none" stroke="#2bbf4f" stroke-width="2"/></svg>
<div class="cb" style="left:951px;top:459px"></div>
<div class="cb cbd" style="left:1039px;top:459px"></div>
<div class="ab" style="left:0;top:482px;width:1110px;height:31px;background:#fff;border-bottom:1px solid #e6e6e6"></div>
<div class="cb cbd" style="left:14px;top:490px"></div>
<svg style="left:34px;top:490px" width="15" height="15"><g fill="#cfcfcf" stroke="none"><rect x="7" y="2.5" width="1" height="10"/><rect x="2.5" y="7" width="10" height="1"/><path d="M7.5 0 L10.2 3 L4.8 3 Z"/><path d="M7.5 15 L10.2 12 L4.8 12 Z"/><path d="M0 7.5 L3 4.8 L3 10.2 Z"/><path d="M15 7.5 L12 4.8 L12 10.2 Z"/></g></svg>
<div class="t" style="left:113px;top:491px;font-size:12px;color:#333"><i class="c">直</i><i class="c">接</i><i class="c">上</i><i class="c">级</i> <span style="font-size:13px">(managerid)</span></div>
<div class="t" style="left:311px;top:491px;color:#333"><i class="c">浏</i><i class="c">览</i><i class="c">按</i><i class="c">钮</i></div>
<div class="t" style="left:440px;top:491px;color:#333"><i class="c">人</i><i class="c">力</i><i class="c">资</i><i class="c">源</i></div>
<div class="t" style="left:737px;top:491px;color:#333"><i class="c">上</i><i class="c">下</i><i class="c">级</i><i class="c">关</i><i class="c">系</i></div>
<div class="cb cbd" style="left:862px;top:490px;border-color:#d0d0d0"></div>
<svg style="left:862px;top:490px" width="14" height="14"><path d="M3.2 7.2 L6 10 L11 4.5" fill="none" stroke="#999" stroke-width="1.8"/></svg>
<div class="cb cbd" style="left:951px;top:490px;border-color:#d0d0d0"></div>
<svg style="left:951px;top:490px" width="14" height="14"><path d="M3.2 7.2 L6 10 L11 4.5" fill="none" stroke="#999" stroke-width="1.8"/></svg>
<div class="cb cbd" style="left:1039px;top:490px"></div>
<div class="ab" style="left:0;top:513px;width:1110px;height:31px;background:#fff;border-bottom:1px solid #e6e6e6"></div>
<div class="cb cbd" style="left:14px;top:521px"></div>
<svg style="left:34px;top:521px" width="15" height="15"><g fill="#cfcfcf" stroke="none"><rect x="7" y="2.5" width="1" height="10"/><rect x="2.5" y="7" width="10" height="1"/><path d="M7.5 0 L10.2 3 L4.8 3 Z"/><path d="M7.5 15 L10.2 12 L4.8 12 Z"/><path d="M0 7.5 L3 4.8 L3 10.2 Z"/><path d="M15 7.5 L12 4.8 L12 10.2 Z"/></g></svg>
<div class="t" style="left:113px;top:522px;font-size:12px;color:#333"><i class="c">助</i><i class="c">理</i> <span style="font-size:13px">(assistantid)</span></div>
<div class="t" style="left:311px;top:522px;color:#333"><i class="c">浏</i><i class="c">览</i><i class="c">按</i><i class="c">钮</i></div>
<div class="t" style="left:440px;top:522px;color:#333"><i class="c">人</i><i class="c">力</i><i class="c">资</i><i class="c">源</i></div>
<div class="sel" style="left:737px;top:516px;width:96px"></div>
<div class="t" style="left:748px;top:524px;color:#333"><i class="c">上</i><i class="c">下</i><i class="c">级</i><i class="c">关</i><i class="c">系</i></div>
<svg style="left:817px;top:526px" width="15" height="9"><path d="M1 1 L7.5 7.5 L14 1" fill="none" stroke="#9a9a9a" stroke-width="1.7"/></svg>
<div class="cb" style="left:862px;top:521px"></div>
<svg style="left:862px;top:521px" width="14" height="14"><path d="M3.2 7.2 L6 10 L11 4.5" fill="none" stroke="#2bbf4f" stroke-width="2"/></svg>
<div class="cb" style="left:951px;top:521px"></div>
<div class="cb cbd" style="left:1039px;top:521px"></div>
</div>
<div class="ab" style="left:472px;top:184px;width:1110px;height:2px;background:#b5dcf8"></div>
<div class="ab" style="left:673px;top:290px;width:79px;height:71px;border:3px solid #ef2b2b"></div>
</body></html>
